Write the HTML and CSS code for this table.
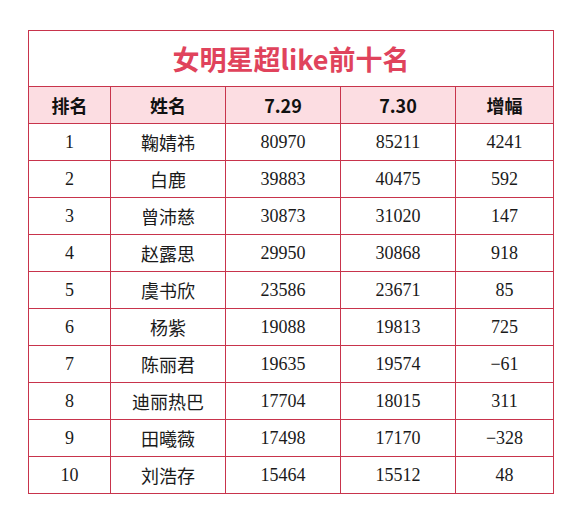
FILE: index.html
```html
<!DOCTYPE html>
<html lang="zh">
<head>
<meta charset="utf-8">
<link rel="stylesheet" href="styles.css">
</head>
<body>
<div class="wrap">
<table class="rank">
  <colgroup>
    <col class="c1"><col class="c2"><col class="c3"><col class="c4"><col class="c5">
  </colgroup>
  <tr class="title"><td colspan="5">女明星超like前十名</td></tr>
  <tr class="head"><th>排名</th><th>姓名</th><th>7.29</th><th>7.30</th><th>增幅</th></tr>
  <tr><td>1</td><td>鞠婧祎</td><td>80970</td><td>85211</td><td>4241</td></tr>
  <tr><td>2</td><td>白鹿</td><td>39883</td><td>40475</td><td>592</td></tr>
  <tr><td>3</td><td>曾沛慈</td><td>30873</td><td>31020</td><td>147</td></tr>
  <tr><td>4</td><td>赵露思</td><td>29950</td><td>30868</td><td>918</td></tr>
  <tr><td>5</td><td>虞书欣</td><td>23586</td><td>23671</td><td>85</td></tr>
  <tr><td>6</td><td>杨紫</td><td>19088</td><td>19813</td><td>725</td></tr>
  <tr><td>7</td><td>陈丽君</td><td>19635</td><td>19574</td><td>−61</td></tr>
  <tr><td>8</td><td>迪丽热巴</td><td>17704</td><td>18015</td><td>311</td></tr>
  <tr><td>9</td><td>田曦薇</td><td>17498</td><td>17170</td><td>−328</td></tr>
  <tr><td>10</td><td>刘浩存</td><td>15464</td><td>15512</td><td>48</td></tr>
</table>
</div>
</body>
</html>
```
FILE: styles.css
```css
html, body {
  margin: 0;
  padding: 0;
  background: #ffffff;
}
.wrap {
  padding: 30px 0 0 28px;
}
.rank {
  border-collapse: collapse;
  width: 525px;
  table-layout: fixed;
  font-family: "Liberation Serif", "Noto Sans CJK SC", serif;
  font-size: 18px;
  color: #1a1a1a;
}
.c1 { width: 82px; }
.c2 { width: 115px; }
.c3 { width: 115px; }
.c4 { width: 115px; }
.c5 { width: 98px; }
.rank td, .rank th {
  border: 1px solid #c8344c;
  text-align: center;
  padding: 0;
  height: 36px;
}
.title td {
  height: 55px;
  font-family: "Noto Sans CJK SC", "Liberation Sans", sans-serif;
  font-weight: 700;
  font-size: 27px;
  color: #e0435c;
}
.head th {
  background: #fcdde2;
  font-family: "Noto Sans CJK SC", "Liberation Sans", sans-serif;
  font-weight: 700;
  font-size: 18px;
  color: #111111;
}
```
